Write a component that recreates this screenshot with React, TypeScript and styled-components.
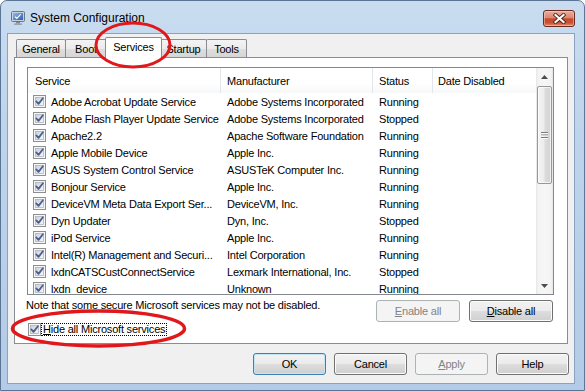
import React from 'react';
import styled, { createGlobalStyle } from 'styled-components';

const GlobalStyle = createGlobalStyle`
  html, body {
    margin: 0;
    padding: 0;
    background: #ffffff;
  }
  body {
    font-family: "Liberation Sans", Arial, sans-serif;
    font-size: 11px;
    letter-spacing: -0.2px;
    color: #000;
  }
  * {
    box-sizing: border-box;
  }
`;

const Window = styled.div`
  position: relative;
  width: 585px;
  height: 391px;
  display: flex;
  flex-direction: column;
  padding: 0 9px 6px 6px;
  border: 1px solid #5d7594;
  border-radius: 7px 7px 0 0;
  background: linear-gradient(180deg, #c9dcf0 0%, #bdd4ec 35%, #b3cbe6 100%);
  overflow: hidden;
`;

const TitleBar = styled.div`
  height: 32px;
  display: flex;
  align-items: center;
  padding: 2px 0 0 4px;
  flex-shrink: 0;
`;

const TitleText = styled.span`
  margin-left: 5px;
  font-size: 12px;
  letter-spacing: 0;
  color: #000;
`;

const CloseButton = styled.div`
  margin-left: auto;
  width: 32px;
  height: 17px;
  border: 1px solid #6b2a20;
  border-radius: 3px;
  background: linear-gradient(180deg, #e9ad9f 0%, #da8872 45%, #c64a2f 52%, #c9502f 78%, #e09172 100%);
  box-shadow: inset 0 0 0 1px rgba(255, 220, 210, 0.45);
  display: flex;
  align-items: center;
  justify-content: center;
`;

const Client = styled.div`
  flex: 1;
  display: flex;
  flex-direction: column;
  background: #f0f0f0;
  border: 1px solid #8ba1bd;
  padding: 3px 6px 0 6px;
`;

const TabStrip = styled.div`
  position: relative;
  z-index: 1;
  height: 21px;
  display: flex;
  align-items: flex-end;
  padding-left: 2px;
  margin-bottom: -1px;
  flex-shrink: 0;
`;

const Tab = styled.div<{ $width: number; $active?: boolean }>`
  position: relative;
  z-index: ${p => (p.$active ? 2 : 1)};
  width: ${p => p.$width}px;
  height: ${p => (p.$active ? 21 : 18)}px;
  margin-bottom: ${p => (p.$active ? 0 : 1)}px;
  margin-left: ${p => (p.$active ? -2 : -1)}px;
  margin-right: ${p => (p.$active ? -1 : 0)}px;
  border: 1px solid #898c95;
  border-bottom: none;
  border-radius: 2px 2px 0 0;
  background: ${p =>
    p.$active ? '#ffffff' : 'linear-gradient(180deg, #f3f3f3 0%, #ebebeb 50%, #dedede 51%, #d6d6d6 100%)'};
  display: flex;
  align-items: center;
  justify-content: center;
  padding-bottom: ${p => (p.$active ? 2 : 0)}px;
  &:first-child {
    margin-left: 0;
  }
`;

const Panel = styled.div`
  height: 287px;
  display: flex;
  flex-direction: column;
  border: 1px solid #898c95;
  background: #ffffff;
  padding: 9px 13px 0 12px;
  flex-shrink: 0;
`;

const ListView = styled.div`
  height: 228px;
  display: flex;
  border: 1px solid #828790;
  background: #ffffff;
  overflow: hidden;
  flex-shrink: 0;
`;

const ListBody = styled.div`
  flex: 1;
  display: flex;
  flex-direction: column;
  overflow: hidden;
`;

const HeaderRow = styled.div`
  height: 25px;
  display: flex;
  flex-shrink: 0;
  background: linear-gradient(180deg, #ffffff 0%, #ffffff 60%, #f7f8f9 100%);
`;

const HeaderCell = styled.div<{ $width?: number; $pad?: number }>`
  ${p => (p.$width ? `width: ${p.$width}px;` : 'flex: 1;')}
  display: flex;
  align-items: center;
  padding-left: ${p => p.$pad ?? 6}px;
  border-right: ${p => (p.$width ? '1px solid #e3e6ea' : 'none')};
  white-space: nowrap;
`;

const Row = styled.div`
  height: 17px;
  display: flex;
  align-items: center;
  flex-shrink: 0;
`;

const Cell = styled.div<{ $width?: number }>`
  ${p => (p.$width ? `width: ${p.$width}px;` : 'flex: 1;')}
  padding-left: 6px;
  white-space: nowrap;
  overflow: hidden;
`;

const ServiceCell = styled.div`
  width: 193px;
  display: flex;
  align-items: center;
  gap: 5px;
  padding-left: 5px;
  white-space: nowrap;
  overflow: hidden;
`;

const ScrollBar = styled.div`
  width: 17px;
  display: flex;
  flex-direction: column;
  background: linear-gradient(90deg, #e6e6e6 0%, #f3f3f3 12%, #f6f6f6 50%, #f3f3f3 88%, #e6e6e6 100%);
  flex-shrink: 0;
`;

const ArrowButton = styled.div`
  height: 17px;
  display: flex;
  align-items: center;
  justify-content: center;
  flex-shrink: 0;
`;

const Thumb = styled.div`
  height: 98px;
  margin: 1px 1px 0 1px;
  border: 1px solid #979797;
  border-radius: 2px;
  background: linear-gradient(90deg, #f4f4f4 0%, #ececec 45%, #dcdcdc 55%, #d2d2d2 100%);
  box-shadow: inset 0 0 0 1px rgba(255, 255, 255, 0.7);
  display: flex;
  align-items: center;
  justify-content: center;
  flex-shrink: 0;
`;

const Track = styled.div`
  flex: 1;
`;

const ActionsRow = styled.div`
  height: 22px;
  margin-top: 5px;
  display: flex;
  align-items: flex-start;
  gap: 9px;
  padding-right: 1px;
  flex-shrink: 0;
`;

const Note = styled.span`
  flex: 1;
  margin: -1px 0 0 -1px;
  line-height: 13px;
  white-space: nowrap;
`;

const HideRow = styled.div`
  height: 14px;
  display: flex;
  align-items: center;
  padding-left: 1px;
  flex-shrink: 0;
`;

const FocusLabel = styled.span`
  border: 1px dotted #000;
  padding: 0 1px;
  line-height: 11px;
`;

const Footer = styled.div`
  display: flex;
  justify-content: flex-end;
  gap: 8px;
  margin-top: 9px;
  margin-right: -1px;
`;

const Button = styled.div<{ $width?: number; $disabled?: boolean; $default?: boolean }>`
  width: ${p => p.$width ?? 73}px;
  height: 22px;
  display: flex;
  align-items: center;
  justify-content: center;
  border-radius: 3px;
  border: 1px solid ${p => (p.$disabled ? '#adb2b5' : p.$default ? '#3c7fb1' : '#707070')};
  color: ${p => (p.$disabled ? '#838383' : '#000')};
  background: ${p =>
    p.$disabled
      ? '#f4f4f4'
      : 'linear-gradient(180deg, #f2f2f2 0%, #ebebeb 49%, #dddddd 50%, #cfcfcf 100%)'};
  box-shadow: inset 0 0 0 1px ${p => (p.$default ? '#c4e5f6' : p.$disabled ? '#f4f4f4' : '#fbfbfb')};
`;

const Mnemonic = styled.span`
  text-decoration: underline;
`;

const Annotations = styled.svg`
  position: absolute;
  left: -1px;
  top: -1px;
  pointer-events: none;
  z-index: 10;
`;

const CheckSvg = styled.svg`
  display: block;
  flex-shrink: 0;
`;

const CheckBox: React.FC = () => (
  <CheckSvg width="13" height="13" viewBox="0 0 13 13">
    <defs>
      <linearGradient id="cbFill" x1="0" y1="0" x2="1" y2="1">
        <stop offset="0" stopColor="#cbd0d6" />
        <stop offset="1" stopColor="#f8f8f8" />
      </linearGradient>
    </defs>
    <rect x="0.5" y="0.5" width="12" height="12" fill="#f6f6f6" stroke="#8e8f8f" />
    <rect x="2.5" y="2.5" width="8" height="8" fill="url(#cbFill)" stroke="#b0b5bb" strokeWidth="0.8" />
    <path d="M3.3 6.4 L5.5 8.9 L9.9 3.3" fill="none" stroke="#4b5f94" strokeWidth="1.8" strokeLinecap="round" strokeLinejoin="round" />
  </CheckSvg>
);

const AppIcon: React.FC = () => (
  <svg width="14" height="14" viewBox="0 0 14 14">
    <defs>
      <linearGradient id="scr" x1="0" y1="0" x2="1" y2="1">
        <stop offset="0" stopColor="#8fb9ee" />
        <stop offset="1" stopColor="#2b5eb3" />
      </linearGradient>
    </defs>
    <rect x="0.5" y="0.5" width="13" height="10" rx="1" fill="#c9d0d8" stroke="#6a7688" />
    <rect x="2" y="2" width="10" height="7" fill="url(#scr)" />
    <path d="M4 5.6 L5.8 7.3 L9.6 3.4" fill="none" stroke="#ffffff" strokeWidth="1.2" />
    <rect x="5" y="11" width="4" height="1.5" fill="#7d8898" />
    <rect x="3" y="12.5" width="8" height="1.3" fill="#8d97a5" />
  </svg>
);

const CloseGlyph: React.FC = () => (
  <svg width="13" height="11" viewBox="0 0 13 11">
    <path d="M2.5 2 L10.5 9 M10.5 2 L2.5 9" stroke="#4a1a12" strokeWidth="3.8" strokeLinecap="square" />
    <path d="M2.5 2 L10.5 9 M10.5 2 L2.5 9" stroke="#ffffff" strokeWidth="2.2" strokeLinecap="square" />
  </svg>
);

const ArrowUp: React.FC = () => (
  <svg width="7" height="4" viewBox="0 0 7 4">
    <path d="M0 4 L3.5 0 L7 4 Z" fill="#4d4d4d" />
  </svg>
);

const ArrowDown: React.FC = () => (
  <svg width="7" height="4" viewBox="0 0 7 4">
    <path d="M0 0 L3.5 4 L7 0 Z" fill="#4d4d4d" />
  </svg>
);

const Grip: React.FC = () => (
  <svg width="7" height="7" viewBox="0 0 7 7">
    {[0.5, 3, 5.5].map(y => (
      <g key={y}>
        <line x1="0" y1={y} x2="7" y2={y} stroke="#7a7a7a" strokeWidth="1" />
        <line x1="0" y1={y + 1} x2="7" y2={y + 1} stroke="#fafafa" strokeWidth="1" />
      </g>
    ))}
  </svg>
);

const tabs = [
  { label: 'General', width: 50 },
  { label: 'Boot', width: 42 },
  { label: 'Services', width: 57, active: true },
  { label: 'Startup', width: 47 },
  { label: 'Tools', width: 41 },
];

const services = [
  ['Adobe Acrobat Update Service', 'Adobe Systems Incorporated', 'Running'],
  ['Adobe Flash Player Update Service', 'Adobe Systems Incorporated', 'Stopped'],
  ['Apache2.2', 'Apache Software Foundation', 'Running'],
  ['Apple Mobile Device', 'Apple Inc.', 'Running'],
  ['ASUS System Control Service', 'ASUSTeK Computer Inc.', 'Running'],
  ['Bonjour Service', 'Apple Inc.', 'Running'],
  ['DeviceVM Meta Data Export Ser...', 'DeviceVM, Inc.', 'Running'],
  ['Dyn Updater', 'Dyn, Inc.', 'Stopped'],
  ['iPod Service', 'Apple Inc.', 'Running'],
  ['Intel(R) Management and Securi...', 'Intel Corporation', 'Running'],
  ['lxdnCATSCustConnectService', 'Lexmark International, Inc.', 'Stopped'],
  ['lxdn_device', 'Unknown', 'Running'],
];

export default function App() {
  return (
    <>
      <GlobalStyle />
      <Window>
        <TitleBar>
          <AppIcon />
          <TitleText>System Configuration</TitleText>
          <CloseButton>
            <CloseGlyph />
          </CloseButton>
        </TitleBar>

        <Client>
          <TabStrip>
            {tabs.map(t => (
              <Tab key={t.label} $width={t.width} $active={t.active}>
                {t.label}
              </Tab>
            ))}
          </TabStrip>

          <Panel>
            <ListView>
              <ListBody>
                <HeaderRow>
                  <HeaderCell $width={193} $pad={7}>Service</HeaderCell>
                  <HeaderCell $width={152}>Manufacturer</HeaderCell>
                  <HeaderCell $width={60}>Status</HeaderCell>
                  <HeaderCell $pad={5}>Date Disabled</HeaderCell>
                </HeaderRow>
                {services.map(([name, maker, status]) => (
                  <Row key={name}>
                    <ServiceCell>
                      <CheckBox />
                      {name}
                    </ServiceCell>
                    <Cell $width={152}>{maker}</Cell>
                    <Cell $width={60}>{status}</Cell>
                    <Cell />
                  </Row>
                ))}
              </ListBody>
              <ScrollBar>
                <ArrowButton>
                  <ArrowUp />
                </ArrowButton>
                <Thumb>
                  <Grip />
                </Thumb>
                <Track />
                <ArrowButton>
                  <ArrowDown />
                </ArrowButton>
              </ScrollBar>
            </ListView>

            <ActionsRow>
              <Note>Note that some secure Microsoft services may not be disabled.</Note>
              <Button $width={84} $disabled>
                <Mnemonic>E</Mnemonic>nable all
              </Button>
              <Button $width={84}>
                <Mnemonic>D</Mnemonic>isable all
              </Button>
            </ActionsRow>

            <HideRow>
              <CheckBox />
              <FocusLabel>
                <Mnemonic>H</Mnemonic>ide all Microsoft services
              </FocusLabel>
            </HideRow>
          </Panel>

          <Footer>
            <Button $default>OK</Button>
            <Button>Cancel</Button>
            <Button $disabled>
              <Mnemonic>A</Mnemonic>pply
            </Button>
            <Button>Help</Button>
          </Footer>
        </Client>

        <Annotations width="585" height="391" viewBox="0 0 585 391">
          <ellipse cx="133" cy="45" rx="37" ry="22" fill="none" stroke="#e0181c" strokeWidth="3" />
          <ellipse cx="98.5" cy="328.5" rx="86" ry="17.5" fill="none" stroke="#e0181c" strokeWidth="3.5" />
        </Annotations>
      </Window>
    </>
  );
}
